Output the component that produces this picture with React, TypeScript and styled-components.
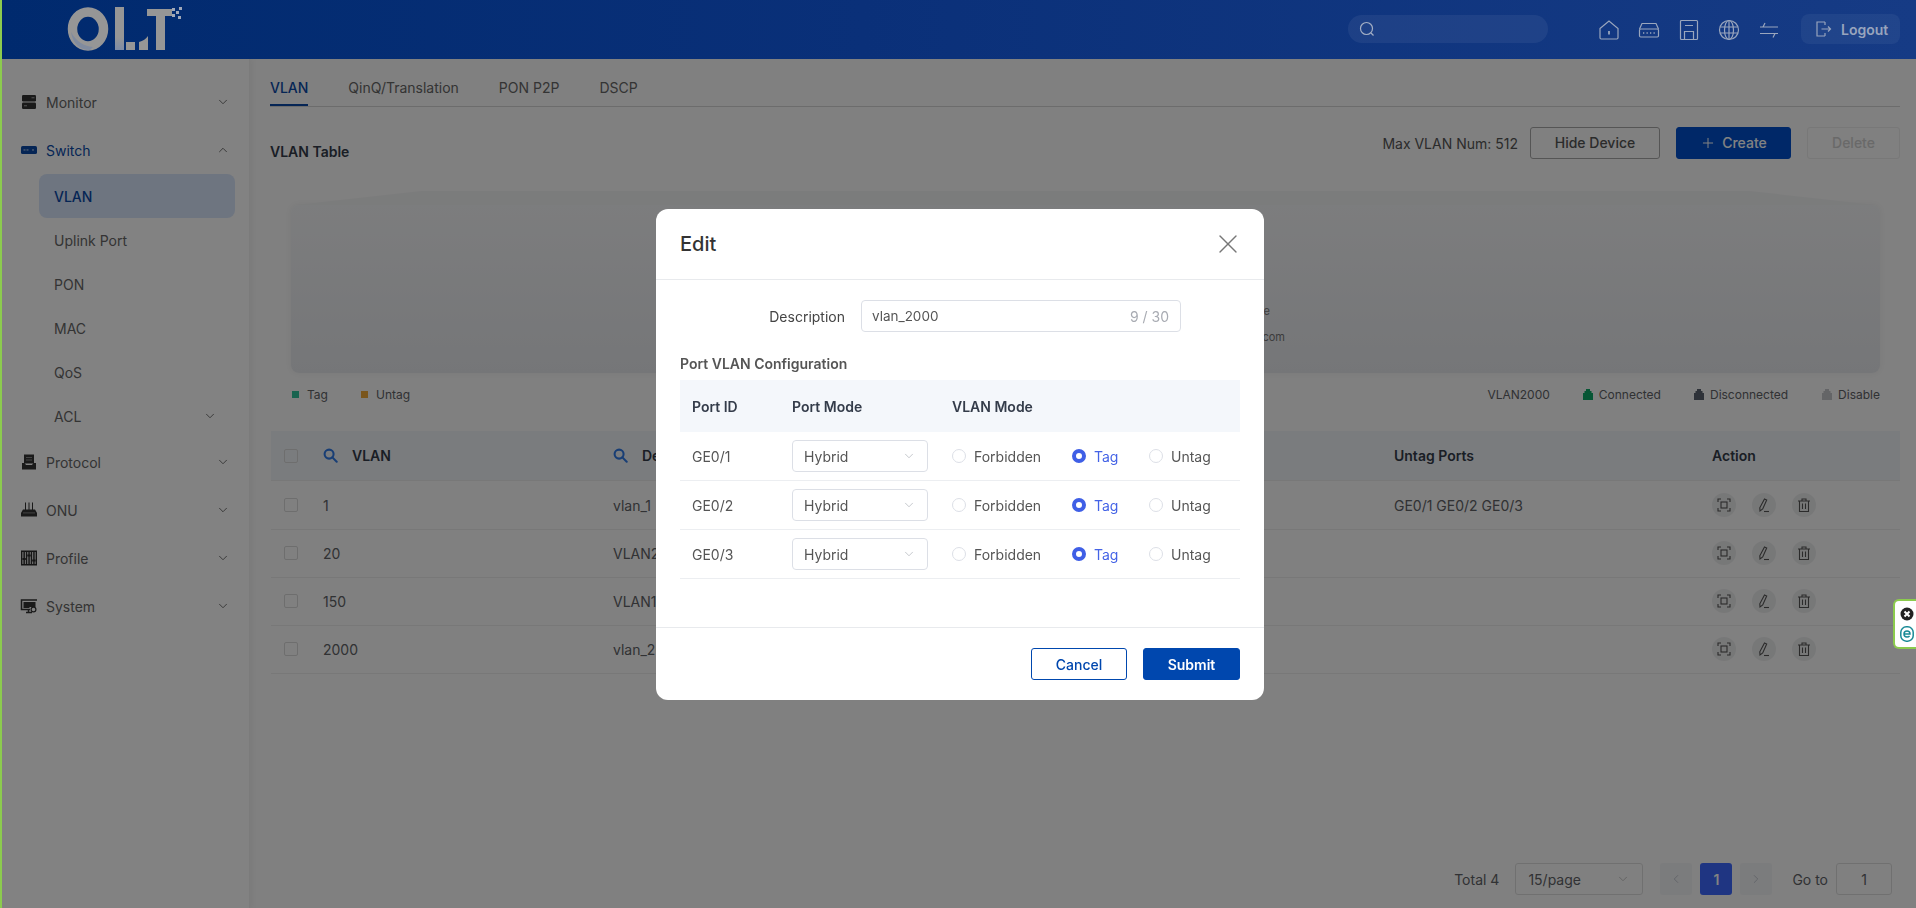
import React from "react";
import styled, { createGlobalStyle } from "styled-components";
import { ChevronDown, ChevronLeft, ChevronRight, ChevronUp, Plus, X } from "lucide-react";

const GlobalStyle = createGlobalStyle`
  html, body { margin: 0; padding: 0; height: 100%; overflow: hidden; background: #fbfbfb; }
  * { box-sizing: border-box; }
  body { font-family: Inter, "Liberation Sans", sans-serif; font-size: 14px; color: #606266; }
`;

const Page = styled("div")`
  width: 1916px;
  height: 908px;
  display: flex;
  flex-direction: column;
`;

/* header sits above the mask, it is not dimmed the same way as the rest */
const Header = styled("header")`
  position: relative;
  z-index: 20;
  flex: 0 0 59px;
  display: flex;
  align-items: center;
  padding: 0 16px 0 64px;
  background: linear-gradient(90deg, #002a6e 0%, #0a3079 45%, #163b85 100%);
`;

const Logo = styled("svg")`
  width: 120px;
  height: 50px;
  margin-right: auto;
`;

const SearchBox = styled("div")`
  width: 200px;
  height: 28px;
  margin-top: -1px;
  border-radius: 14px;
  background: rgba(255, 255, 255, 0.06);
  display: flex;
  align-items: center;
  padding-left: 11px;
  color: #a3aec4;
`;

const HeadIcons = styled("div")`
  display: flex;
  gap: 18px;
  margin: 0 21px 0 50px;
`;

const HeadIcon = styled("svg")`
  width: 22px;
  height: 22px;
  fill: none;
  stroke: #9aa6bd;
  stroke-width: 1.2;
`;

const Logout = styled("div")`
  width: 99px;
  height: 30px;
  margin-top: -1px;
  border-radius: 8px;
  background: rgba(255, 255, 255, 0.05);
  display: flex;
  align-items: center;
  gap: 9px;
  padding-left: 13px;
  color: #98a4bd;
  font-weight: 600;
  font-size: 14px;
`;

const Body = styled("div")`
  flex: 1;
  display: flex;
  min-height: 0;
`;

const Sidebar = styled("nav")`
  flex: 0 0 250px;
  padding-top: 19px;
  background: #fff;
  border-right: 1px solid #f2f2f2;
  box-shadow: 2px 0 6px rgba(0, 0, 0, 0.05);
`;

const NavRow = styled("div")<{ $active?: boolean }>`
  height: 48px;
  display: flex;
  align-items: center;
  padding: 0 19px 0 20px;
  color: ${(p) => (p.$active ? "#0a4aa8" : "#666")};
  svg.nav-icon {
    width: 18px;
    height: 18px;
    margin-right: 8px;
    flex: none;
  }
`;

const NavLabel = styled("span")`
  flex: 1;
`;

const SubRow = styled("div")<{ $active?: boolean }>`
  height: 44px;
  margin-left: 39px;
  width: 196px;
  display: flex;
  align-items: center;
  padding: 0 18px 0 15px;
  border-radius: 8px;
  background: ${(p) => (p.$active ? "#d8e5fb" : "transparent")};
  color: ${(p) => (p.$active ? "#0a4aa8" : "#666")};
  font-weight: ${(p) => (p.$active ? 500 : 400)};
`;

const Main = styled("main")`
  flex: 1;
  display: flex;
  flex-direction: column;
  padding: 0 16px 13px 20px;
  min-width: 0;
`;

const Tabs = styled("div")`
  flex: 0 0 47px;
  display: flex;
  gap: 40px;
  border-bottom: 1px solid #d4d4d4;
`;

const Tab = styled("div")<{ $active?: boolean }>`
  height: 47px;
  padding-top: 20px;
  line-height: 18px;
  color: ${(p) => (p.$active ? "#0a4aa8" : "#666")};
  font-weight: ${(p) => (p.$active ? 500 : 400)};
  border-bottom: ${(p) => (p.$active ? "2px solid #0a4aa8" : "none")};
`;

const Toolbar = styled("div")`
  margin-top: 20px;
  height: 32px;
  display: flex;
  align-items: center;
  gap: 16px;
`;

const SectionTitle = styled("div")`
  font-weight: 600;
  color: #343c4a;
  margin: 16px auto 0 0;
`;

const MaxNum = styled("span")`
  color: #555;
  margin-right: -4px;
`;

const ToolButton = styled("button")<{ $kind: "plain" | "primary" | "disabled"; $width: number }>`
  width: ${(p) => p.$width}px;
  height: 32px;
  margin-top: -1px;
  border-radius: 3px;
  font: 500 14px Inter, "Liberation Sans", sans-serif;
  display: flex;
  align-items: center;
  justify-content: center;
  gap: 6px;
  border: 1px solid
    ${(p) => (p.$kind === "plain" ? "#a8a8a8" : p.$kind === "primary" ? "#0050cc" : "#ebebeb")};
  background: ${(p) => (p.$kind === "primary" ? "#0050cc" : "transparent")};
  color: ${(p) => (p.$kind === "plain" ? "#555" : p.$kind === "primary" ? "#fff" : "#cfcfcf")};
`;

const Chassis = styled("div")`
  position: relative;
  margin: 46px 20px 0 21px;
  height: 168px;
  border-radius: 8px;
  background: linear-gradient(180deg, #f4f5f7 0%, #e6e8ec 100%);
  box-shadow: 0 0 6px rgba(0, 0, 0, 0.06);

  &::before {
    content: "";
    position: absolute;
    left: 4px;
    right: 4px;
    top: -14px;
    height: 14px;
    background: #f2f3f4;
    clip-path: polygon(0 100%, 8% 0, 92% 0, 100% 100%);
  }
`;

const ChassisNote = styled("div")`
  position: absolute;
  right: 595px;
  top: 93px;
  text-align: right;
  font-size: 11px;
  line-height: 26px;
  color: #777;
  & > span {
    display: block;
  }
  & > span:first-child {
    padding-right: 15px;
  }
`;

const LegendRow = styled("div")`
  margin-top: 11px;
  height: 20px;
  display: flex;
  align-items: center;
  font-size: 12px;
  color: #606266;
  padding: 0 20px 0 22px;
`;

const LegendMark = styled("i")<{ $color: string; $gap?: number }>`
  width: 7px;
  height: 7px;
  background: ${(p) => p.$color};
  margin-right: 8px;
  margin-left: ${(p) => p.$gap ?? 0}px;
`;

const LegendSpacer = styled("div")`
  flex: 1;
`;

const LegendText = styled("span")`
  white-space: nowrap;
`;

const PortMark = styled("svg")<{ $gap: number }>`
  width: 12px;
  height: 12px;
  margin: 0 5px 0 ${(p) => p.$gap}px;
`;

const PageTable = styled("div")`
  margin-top: 27px;
  width: 1629px;
  margin-left: 1px;
`;

const TableRow = styled("div")<{ $head?: boolean }>`
  display: grid;
  grid-template-columns: 52px 290px 390px 391px 318px 188px;
  align-items: center;
  height: ${(p) => (p.$head ? 50 : 49)}px;
  margin-bottom: ${(p) => (p.$head ? 0 : -1)}px;
  background: ${(p) => (p.$head ? "#f0f3f7" : "transparent")};
  font-weight: ${(p) => (p.$head ? 600 : 400)};
  color: ${(p) => (p.$head ? "#343c4a" : "#606266")};
  border-bottom: 1px solid #ececec;
`;

const Check = styled("span")`
  display: block;
  width: 14px;
  height: 14px;
  margin-left: 13px;
  border: 1px solid #d8d8d8;
  border-radius: 2px;
`;

const HeadCell = styled("div")`
  display: flex;
  align-items: center;
  gap: 14px;
  svg {
    width: 15px;
    height: 15px;
    flex: none;
  }
`;

const Actions = styled("div")`
  display: flex;
  gap: 16px;
`;

const ActionButton = styled("span")`
  width: 24px;
  height: 24px;
  border-radius: 50%;
  background: #eaebec;
  display: flex;
  align-items: center;
  justify-content: center;
  svg {
    width: 16px;
    height: 16px;
    fill: none;
    stroke: #555;
    stroke-width: 1.1;
  }
`;

const Pagination = styled("div")`
  margin-top: auto;
  display: flex;
  align-items: center;
  justify-content: flex-end;
  padding-right: 8px;
  height: 32px;
  font-size: 14px;
  color: #606266;
`;

const PageSelect = styled("div")`
  width: 128px;
  height: 32px;
  margin: 0 17px 0 16px;
  border: 1px solid #dcdcdc;
  border-radius: 3px;
  display: flex;
  align-items: center;
  justify-content: space-between;
  padding: 0 12px;
  svg {
    color: #b8b8b8;
  }
`;

const PageBtn = styled("div")<{ $active?: boolean }>`
  width: 32px;
  height: 32px;
  margin-right: 8px;
  border-radius: 3px;
  display: flex;
  align-items: center;
  justify-content: center;
  background: ${(p) => (p.$active ? "#3e68ff" : "#f2f3f5")};
  color: ${(p) => (p.$active ? "#fff" : "#c0c4cc")};
  font-weight: ${(p) => (p.$active ? 600 : 400)};
`;

const GoLabel = styled("span")`
  margin-left: 12px;
`;

const GoInput = styled("div")`
  width: 56px;
  height: 32px;
  margin-left: 8px;
  border: 1px solid #dcdcdc;
  border-radius: 3px;
  display: flex;
  align-items: center;
  justify-content: center;
`;

const Mask = styled("div")`
  position: fixed;
  inset: 0;
  z-index: 10;
  background: rgba(0, 0, 0, 0.49);
  display: flex;
  justify-content: center;
  align-items: flex-start;
  padding: 209px 0 0 4px;
`;

const Modal = styled("div")`
  width: 608px;
  height: 491px;
  background: #fff;
  border-radius: 12px;
  display: flex;
  flex-direction: column;
  color: #555;
`;

const ModalHead = styled("div")`
  flex: 0 0 71px;
  display: flex;
  align-items: center;
  justify-content: space-between;
  padding: 0 20px 0 24px;
  border-bottom: 1px solid #e8eaed;
  font-size: 20px;
  font-weight: 500;
  color: #333;
  svg {
    color: #777;
  }
`;

const ModalBody = styled("div")`
  flex: 1;
  padding: 20px 24px 0;
`;

const FormRow = styled("div")`
  display: flex;
  align-items: center;
  height: 32px;
`;

const FormLabel = styled("label")`
  width: 165px;
  text-align: right;
  margin-right: 16px;
  color: #444;
`;

const TextInput = styled("div")`
  width: 320px;
  height: 32px;
  border: 1px solid #dcdfe6;
  border-radius: 4px;
  display: flex;
  align-items: center;
  justify-content: space-between;
  padding: 0 11px 0 10px;
`;

const InputValue = styled("span")`
  font-size: 13.5px;
`;

const Counter = styled("span")`
  color: #a8abb2;
`;

const SubTitle = styled("div")`
  margin-top: 24px;
  height: 17px;
  line-height: 16px;
  font-weight: 600;
  font-size: 14px;
  color: #555;
`;

const PortRow = styled("div")<{ $head?: boolean }>`
  display: grid;
  grid-template-columns: 100px 160px 1fr;
  align-items: center;
  height: ${(p) => (p.$head ? 52 : 49)}px;
  padding-left: 12px;
  background: ${(p) => (p.$head ? "#f4f7fb" : "transparent")};
  border-bottom: ${(p) => (p.$head ? "none" : "1px solid #eceef1")};
  font-weight: ${(p) => (p.$head ? 600 : 400)};
  color: ${(p) => (p.$head ? "#343c4a" : "#555")};
`;

const PortTable = styled("div")`
  margin-top: 7px;
`;

const PortSelect = styled("div")`
  width: 136px;
  height: 32px;
  border: 1px solid #dcdfe6;
  border-radius: 4px;
  display: flex;
  align-items: center;
  justify-content: space-between;
  padding: 0 11px;
  svg {
    color: #aeb2b9;
  }
`;

const RadioGroup = styled("div")`
  display: flex;
  align-items: center;
`;

const RadioOption = styled("div")<{ $width: number; $on?: boolean }>`
  width: ${(p) => p.$width}px;
  display: flex;
  align-items: center;
  gap: 8px;
  color: ${(p) => (p.$on ? "#4463e6" : "#555")};
`;

const RadioDot = styled("span")<{ $on?: boolean }>`
  width: 14px;
  height: 14px;
  border-radius: 50%;
  border: ${(p) => (p.$on ? "4px solid #3f5fe6" : "1px solid #dcdfe6")};
  background: #fff;
`;

const ModalFoot = styled("div")`
  flex: 0 0 73px;
  display: flex;
  justify-content: flex-end;
  align-items: flex-start;
  gap: 16px;
  padding: 20px 24px 0;
  border-top: 1px solid #e8eaed;
`;

const FootButton = styled("button")<{ $primary?: boolean }>`
  height: 32px;
  width: ${(p) => (p.$primary ? 97 : 96)}px;
  border-radius: 3px;
  border: 1px solid #0047ae;
  background: ${(p) => (p.$primary ? "#0047ae" : "#fff")};
  color: ${(p) => (p.$primary ? "#fff" : "#0047ae")};
  font: ${(p) => (p.$primary ? 600 : 500)} 14px Inter, "Liberation Sans", sans-serif;
`;

const EdgeStripe = styled("div")`
  position: fixed;
  z-index: 30;
  left: 0;
  top: 0;
  bottom: 0;
  width: 2px;
  background: #8ccb4e;
`;

const EsetWidget = styled("div")`
  position: fixed;
  z-index: 30;
  right: 0;
  top: 599px;
  width: 23px;
  height: 50px;
  background: #fff;
  border: 2px solid #8ccb4e;
  border-right: none;
  border-radius: 6px 0 0 6px;
  display: flex;
  flex-direction: column;
  align-items: center;
  justify-content: center;
  gap: 5px;
  padding-left: 2px;
`;

const rows = [
  { id: "1", desc: "vlan_1", untag: "GE0/1 GE0/2 GE0/3" },
  { id: "20", desc: "VLAN20", untag: "" },
  { id: "150", desc: "VLAN150", untag: "" },
  { id: "2000", desc: "vlan_2000", untag: "" },
];

const ports = ["GE0/1", "GE0/2", "GE0/3"];

const MagnifierBlue = () => (
  <svg viewBox="0 0 16 16" fill="none" stroke="#2f7ae5" strokeWidth="2.2">
    <circle cx="6.5" cy="6.5" r="4.8" />
    <path d="M10 10l4.6 4.6" strokeLinecap="round" />
  </svg>
);

const Chevron = () => <ChevronDown size={14} strokeWidth={1.4} color="#555" />;

const IconMonitor = () => (
  <svg className="nav-icon" viewBox="0 0 18 18" fill="#333">
    <rect x="2" y="2" width="14" height="6.4" rx="1.2" />
    <rect x="2" y="9.6" width="14" height="6.4" rx="1.2" />
    <rect x="11.5" y="4" width="3" height="1.4" fill="#888" />
    <rect x="4" y="12" width="3" height="1.4" fill="#888" />
  </svg>
);

const IconSwitch = () => (
  <svg className="nav-icon" viewBox="0 0 18 18" fill="#0a4aa8">
    <rect x="1" y="5" width="16" height="8" rx="1.6" />
    <rect x="3.5" y="8.3" width="2" height="1.3" fill="#9db8e0" />
    <rect x="6.5" y="8.3" width="2" height="1.3" fill="#9db8e0" />
    <rect x="12" y="8.3" width="2" height="1.3" fill="#9db8e0" />
  </svg>
);

const IconProtocol = () => (
  <svg className="nav-icon" viewBox="0 0 18 18" fill="#333">
    <path d="M4 1.5h10v9H4z" />
    <path d="M6 4h6v1H6zM6 6.4h6v1H6z" fill="#888" />
    <path d="M2 10h2.6l1.4 2h6l1.4-2H16v6.5H2z" />
  </svg>
);

const IconOnu = () => (
  <svg className="nav-icon" viewBox="0 0 18 18" fill="#333">
    <path d="M5 1.5h1V9H5zM8.5 1.5h1V9h-1zM12 1.5h1V9h-1z" />
    <path d="M3 8.5h12l2 3.5v3.5H1V12z" />
    <path d="M3 11.4h12v1H3z" fill="#888" />
  </svg>
);

const IconProfile = () => (
  <svg className="nav-icon" viewBox="0 0 18 18" fill="#2b2b2b">
    <path d="M1 1.500h16v15H1zM2.400 2.900v12.200h3.400V2.900zM7.300 2.900v12.200h3.400V2.900zM12.200 2.900v12.200h3.400V2.900z" fillRule="evenodd" />
    <path d="M3.400 2.900h1.500v12.200H3.400zM8.300 2.900h1.500v12.200H8.300zM13.200 2.900h1.500v12.200h-1.500z" />
    <path d="M2.400 9h3.400v2H2.400zM7.300 5.500h3.400v2H7.300zM12.200 10.500h3.400v2h-3.400z" />
  </svg>
);

const IconSystem = () => (
  <svg className="nav-icon" viewBox="0 0 18 18" fill="none" stroke="#333" strokeWidth="1.5">
    <path d="M17 3H1.5v9.5H10" />
    <path d="M3.5 5h12v5h-6v1h-6z" fill="#333" stroke="none" />
    <path d="M6 15.5h6M8.5 13v2.5" />
    <circle cx="13.5" cy="12.5" r="2.4" strokeWidth="1.2" />
  </svg>
);

const PortGlyph = ({ color, gap }: { color: string; gap: number }) => (
  <PortMark $gap={gap} viewBox="0 0 12 12" fill={color}>
    <path d="M1 12V5h1.5V3H4V1h4v2h1.5v2H11v7z" />
  </PortMark>
);

const App: React.FC = () => {
  return (
    <Page>
      <GlobalStyle />
      <EdgeStripe />
      <Header>
        <Logo viewBox="0 0 120 50">
          <defs>
            <linearGradient id="logoBar" x1="0" y1="0" x2="0" y2="1">
              <stop offset="0" stopColor="#969696" />
              <stop offset="0.7" stopColor="#969696" />
              <stop offset="1" stopColor="#7e8ca6" />
            </linearGradient>
          </defs>
          <ellipse cx="24" cy="24" rx="15.500" ry="17" fill="none" stroke="#969696" strokeWidth="9.500" />
          <path d="M7 27c5 9 12 14 22 15l-3 3c-10 0-17-6-19-18z" fill="#808b9f" />
          <path d="M51 2h9v43h-9z" fill="url(#logoBar)" />
          <path d="M62 37h9v8h-9z" fill="#969696" />
          <path d="M75 37c4-1 7-3 9-6v14h-9z" fill="#969696" />
          <path d="M83 4h25v7h-7v34H92V11h-9z" fill="#969696" />
          <path d="M108 3h3v3h-3zM112 6h3v3h-3zM115 2h3v3h-3zM108 9h3v3h-3zM114 11h3v3h-3z" fill="#a0a8b8" />
        </Logo>
        <SearchBox>
          <svg width="16" height="16" viewBox="0 0 16 16" fill="none" stroke="currentColor" strokeWidth="1.2">
            <circle cx="7.5" cy="7.5" r="6" />
            <path d="M12 12l2.5 2.5" />
          </svg>
        </SearchBox>
        <HeadIcons>
          <HeadIcon viewBox="0 0 22 22">
            <path d="M2 9.5L11 2l9 7.5v9.3a1.2 1.2 0 0 1-1.2 1.2H3.2A1.2 1.2 0 0 1 2 18.800z" />
            <path d="M11 12v3.500" strokeWidth="1.8" />
          </HeadIcon>
          <HeadIcon viewBox="0 0 22 22">
            <path d="M1.500 10l2.500-5.500h14l2.500 5.500" />
            <rect x="1.500" y="10" width="19" height="8" rx="1.200" />
            <path d="M5 14h1.300M8.500 14h1.300M12 14h1.300M15.500 14h1.300" strokeWidth="1.500" />
          </HeadIcon>
          <HeadIcon viewBox="0 0 22 22">
            <rect x="2.500" y="1.500" width="17" height="19" rx="1" />
            <path d="M7 6.500h8M6.500 20.500v-8h9v8" />
          </HeadIcon>
          <HeadIcon viewBox="0 0 22 22">
            <circle cx="11" cy="11" r="9.500" />
            <ellipse cx="11" cy="11" rx="4.500" ry="9.500" />
            <path d="M11 1.500v19M2 8h18M2 14h18" />
          </HeadIcon>
          <HeadIcon viewBox="0 0 22 22">
            <path d="M2 8h18M5 8l2-4" />
            <path d="M2 14.500h18M17 14.500l-2 4" />
          </HeadIcon>
        </HeadIcons>
        <Logout>
          <svg width="18" height="18" viewBox="0 0 18 18" fill="none" stroke="currentColor" strokeWidth="1.2">
            <path d="M11 2H3v14h8M11 2v3M11 13v3" />
            <path d="M7.500 9h9M14 6.500L16.500 9 14 11.500" />
          </svg>
          Logout
        </Logout>
      </Header>

      <Body>
        <Sidebar>
          <NavRow>
            <IconMonitor />
            <NavLabel>Monitor</NavLabel>
            <Chevron />
          </NavRow>
          <NavRow $active>
            <IconSwitch />
            <NavLabel>Switch</NavLabel>
            <ChevronUp size={14} strokeWidth={1.4} color="#555" />
          </NavRow>
          <SubRow $active>VLAN</SubRow>
          <SubRow>Uplink Port</SubRow>
          <SubRow>PON</SubRow>
          <SubRow>MAC</SubRow>
          <SubRow>QoS</SubRow>
          <SubRow>
            <NavLabel>ACL</NavLabel>
            <Chevron />
          </SubRow>
          <NavRow>
            <IconProtocol />
            <NavLabel>Protocol</NavLabel>
            <Chevron />
          </NavRow>
          <NavRow>
            <IconOnu />
            <NavLabel>ONU</NavLabel>
            <Chevron />
          </NavRow>
          <NavRow>
            <IconProfile />
            <NavLabel>Profile</NavLabel>
            <Chevron />
          </NavRow>
          <NavRow>
            <IconSystem />
            <NavLabel>System</NavLabel>
            <Chevron />
          </NavRow>
        </Sidebar>

        <Main>
          <Tabs>
            <Tab $active>VLAN</Tab>
            <Tab>QinQ/Translation</Tab>
            <Tab>PON P2P</Tab>
            <Tab>DSCP</Tab>
          </Tabs>

          <Toolbar>
            <SectionTitle>VLAN Table</SectionTitle>
            <MaxNum>Max VLAN Num: 512</MaxNum>
            <ToolButton $kind="plain" $width={130}>Hide Device</ToolButton>
            <ToolButton $kind="primary" $width={115}>
              <Plus size={16} strokeWidth={1.5} />
              Create
            </ToolButton>
            <ToolButton $kind="disabled" $width={93}>Delete</ToolButton>
          </Toolbar>

          <Chassis>
            <ChassisNote>
              <span>e</span>
              <span>com</span>
            </ChassisNote>
          </Chassis>

          <LegendRow>
            <LegendMark $color="#2fc39c" />
            <LegendText>Tag</LegendText>
            <LegendMark $color="#f0a93a" $gap={33} />
            <LegendText>Untag</LegendText>
            <LegendSpacer />
            <LegendText>VLAN2000</LegendText>
            <PortGlyph color="#0fa968" gap={32} />
            <LegendText>Connected</LegendText>
            <PortGlyph color="#5a6270" gap={32} />
            <LegendText>Disconnected</LegendText>
            <PortGlyph color="#c4c6ca" gap={33} />
            <LegendText>Disable</LegendText>
          </LegendRow>

          <PageTable>
            <TableRow $head>
              <Check />
              <HeadCell>
                <MagnifierBlue />
                VLAN
              </HeadCell>
              <HeadCell>
                <MagnifierBlue />
                Description
              </HeadCell>
              <div />
              <div>Untag Ports</div>
              <div>Action</div>
            </TableRow>
            {rows.map((row) => (
              <TableRow key={row.id}>
                <Check />
                <div>{row.id}</div>
                <div>{row.desc}</div>
                <div />
                <div>{row.untag}</div>
                <Actions>
                  <ActionButton>
                    <svg viewBox="0 0 16 16">
                      <path d="M5 2H2v3M11 2h3v3M14 11v3h-3M5 14H2v-3" />
                      <rect x="5" y="5" width="6" height="6" />
                    </svg>
                  </ActionButton>
                  <ActionButton>
                    <svg viewBox="0 0 16 16">
                      <path d="M8.500 2l2.200 1-4 9-2.700 2-.2-3.200z" />
                      <path d="M8 14.500h5" />
                    </svg>
                  </ActionButton>
                  <ActionButton>
                    <svg viewBox="0 0 16 16">
                      <path d="M2 4h12M6 4V2h4v2M3.500 4v10.500h9V4M6.500 6.500v5.500M9.500 6.500v5.500" />
                    </svg>
                  </ActionButton>
                </Actions>
              </TableRow>
            ))}
          </PageTable>

          <Pagination>
            <span>Total 4</span>
            <PageSelect>
              15/page
              <ChevronDown size={14} strokeWidth={1.4} />
            </PageSelect>
            <PageBtn>
              <ChevronLeft size={14} strokeWidth={1.6} />
            </PageBtn>
            <PageBtn $active>1</PageBtn>
            <PageBtn>
              <ChevronRight size={14} strokeWidth={1.6} />
            </PageBtn>
            <GoLabel>Go to</GoLabel>
            <GoInput>1</GoInput>
          </Pagination>
        </Main>
      </Body>

      <Mask>
        <Modal>
          <ModalHead>
            Edit
            <X size={32} strokeWidth={1} />
          </ModalHead>
          <ModalBody>
            <FormRow>
              <FormLabel>Description</FormLabel>
              <TextInput>
                <InputValue>vlan_2000</InputValue>
                <Counter>9 / 30</Counter>
              </TextInput>
            </FormRow>
            <SubTitle>Port VLAN Configuration</SubTitle>
            <PortTable>
              <PortRow $head>
                <div>Port ID</div>
                <div>Port Mode</div>
                <div>VLAN Mode</div>
              </PortRow>
              {ports.map((port) => (
                <PortRow key={port}>
                  <div>{port}</div>
                  <PortSelect>
                    Hybrid
                    <ChevronDown size={14} strokeWidth={1.2} />
                  </PortSelect>
                  <RadioGroup>
                    <RadioOption $width={120}>
                      <RadioDot />
                      Forbidden
                    </RadioOption>
                    <RadioOption $width={77} $on>
                      <RadioDot $on />
                      Tag
                    </RadioOption>
                    <RadioOption $width={70}>
                      <RadioDot />
                      Untag
                    </RadioOption>
                  </RadioGroup>
                </PortRow>
              ))}
            </PortTable>
          </ModalBody>
          <ModalFoot>
            <FootButton>Cancel</FootButton>
            <FootButton $primary>Submit</FootButton>
          </ModalFoot>
        </Modal>
      </Mask>

      <EsetWidget>
        <svg width="14" height="14" viewBox="0 0 14 14">
          <circle cx="7" cy="7" r="6.500" fill="#222" />
          <path d="M4.500 4.500l5 5M9.500 4.500l-5 5" stroke="#fff" strokeWidth="2" />
        </svg>
        <svg width="14" height="16" viewBox="0 0 14 16" fill="none">
          <rect x="0.800" y="0.800" width="12.400" height="14.400" rx="5.500" stroke="#1a8a96" strokeWidth="1.500" />
          <path d="M4 8h6c0-2-1-3-3-3S4 6 4 8s1 3 3 3c1.200 0 2-.4 2.600-1" stroke="#1a8a96" strokeWidth="1.500" />
        </svg>
      </EsetWidget>
    </Page>
  );
};

export default App;
